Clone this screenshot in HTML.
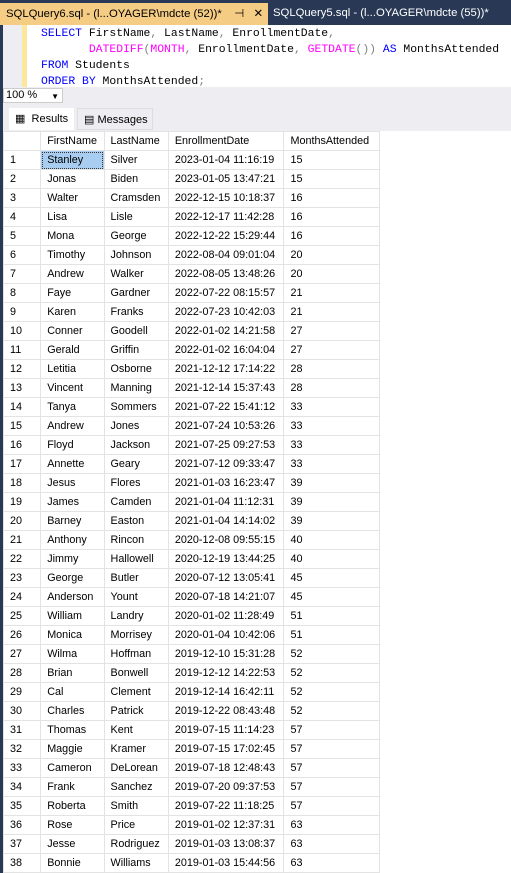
<!DOCTYPE html>
<html><head><style>
*{margin:0;padding:0;box-sizing:border-box}
body{width:511px;height:870px;overflow:hidden;background:#fff;font-family:"Liberation Sans",sans-serif;position:relative}
.tabs{position:absolute;left:0;top:0;width:511px;height:25px;background:#293955}
.tab1{position:absolute;left:0;top:3px;width:268px;height:22px;background:#f5cc84;color:#000;font-size:11.3px;padding:4px 0 0 6px;white-space:nowrap}
.tab2{position:absolute;left:273px;top:3px;color:#fff;font-size:11.3px;padding:4px 0 0 0;white-space:nowrap}
.ed{position:absolute;left:0;top:25px;width:511px;height:62px;background:#fff}
.gut{position:absolute;left:0;top:25px;width:22px;height:62px;background:#eeeef2;border-left:3px solid #293955}
.ybar{position:absolute;left:22px;top:25px;width:5px;height:62px;background:#fce89c}
.code{position:absolute;left:41px;top:26px;font-family:"Liberation Mono",monospace;font-size:11.4px;line-height:16px;white-space:pre;color:#000}
.k{color:#0000ff}.f{color:#ff00ff}.g{color:#808080}
.zoom{position:absolute;left:0;top:87px;width:511px;height:17px;background:#eeeef2;border-left:3px solid #293955}
.zbox{position:absolute;left:3px;top:88px;width:60px;height:15px;background:#fff;border:1px solid #ccc;font-size:11px;padding:0 0 0 2px}
.res{position:absolute;left:0;top:104px;width:511px;height:27px;background:#eeeef2;border-left:3px solid #293955}
.rt{position:absolute;top:108px;font-size:11px;height:22px;padding:4px 6px;white-space:nowrap}
.grid{position:absolute;left:0;top:131px;border-left:3px solid #293955}
table{border-collapse:collapse;font-size:10.8px;background:#fff;table-layout:fixed;width:377px}
td{height:19px;border:1px solid #e3e3e3;padding:0 0 0 6px;white-space:nowrap;overflow:hidden;color:#000}
</style></head><body>
<div class="tabs"></div>
<div class="tab1">SQLQuery6.sql - (l...OYAGER\mdcte (52))* &nbsp;&nbsp;&nbsp;⊣ &nbsp;&nbsp;✕</div>
<div class="tab2">SQLQuery5.sql - (l...OYAGER\mdcte (55))*</div>
<div class="ed"></div><div class="gut"></div><div class="ybar"></div>
<div class="code"><span class="k">SELECT</span> FirstName<span class="g">,</span> LastName<span class="g">,</span> EnrollmentDate<span class="g">,</span>
       <span class="f">DATEDIFF</span><span class="g">(</span><span class="f">MONTH</span><span class="g">,</span> EnrollmentDate<span class="g">,</span> <span class="f">GETDATE</span><span class="g">())</span> <span class="k">AS</span> MonthsAttended
<span class="k">FROM</span> Students
<span class="k">ORDER BY</span> MonthsAttended<span class="g">;</span></div>
<div class="zoom"></div>
<div class="zbox">100 % <span style="float:right;font-size:8px;padding:3px 3px 0 0">▼</span></div>
<div class="res"></div>
<div class="rt" style="left:9px;background:#fff;">▦ &nbsp;Results</div>
<div class="rt" style="left:77px;width:76px;background:#eeeef2;border:1px solid #ddd">▤ Messages</div>
<div class="grid"><table>
<colgroup><col style="width:37px"><col style="width:63px"><col style="width:64px"><col style="width:115px"><col style="width:95px"></colgroup>
<tr><td></td><td>FirstName</td><td>LastName</td><td>EnrollmentDate</td><td>MonthsAttended</td></tr>
<tr><td>1</td><td style="background:#a8cdf0;outline:1px dotted #333;outline-offset:-2px">Stanley</td><td>Silver</td><td>2023-01-04 11:16:19</td><td>15</td></tr>
<tr><td>2</td><td>Jonas</td><td>Biden</td><td>2023-01-05 13:47:21</td><td>15</td></tr>
<tr><td>3</td><td>Walter</td><td>Cramsden</td><td>2022-12-15 10:18:37</td><td>16</td></tr>
<tr><td>4</td><td>Lisa</td><td>Lisle</td><td>2022-12-17 11:42:28</td><td>16</td></tr>
<tr><td>5</td><td>Mona</td><td>George</td><td>2022-12-22 15:29:44</td><td>16</td></tr>
<tr><td>6</td><td>Timothy</td><td>Johnson</td><td>2022-08-04 09:01:04</td><td>20</td></tr>
<tr><td>7</td><td>Andrew</td><td>Walker</td><td>2022-08-05 13:48:26</td><td>20</td></tr>
<tr><td>8</td><td>Faye</td><td>Gardner</td><td>2022-07-22 08:15:57</td><td>21</td></tr>
<tr><td>9</td><td>Karen</td><td>Franks</td><td>2022-07-23 10:42:03</td><td>21</td></tr>
<tr><td>10</td><td>Conner</td><td>Goodell</td><td>2022-01-02 14:21:58</td><td>27</td></tr>
<tr><td>11</td><td>Gerald</td><td>Griffin</td><td>2022-01-02 16:04:04</td><td>27</td></tr>
<tr><td>12</td><td>Letitia</td><td>Osborne</td><td>2021-12-12 17:14:22</td><td>28</td></tr>
<tr><td>13</td><td>Vincent</td><td>Manning</td><td>2021-12-14 15:37:43</td><td>28</td></tr>
<tr><td>14</td><td>Tanya</td><td>Sommers</td><td>2021-07-22 15:41:12</td><td>33</td></tr>
<tr><td>15</td><td>Andrew</td><td>Jones</td><td>2021-07-24 10:53:26</td><td>33</td></tr>
<tr><td>16</td><td>Floyd</td><td>Jackson</td><td>2021-07-25 09:27:53</td><td>33</td></tr>
<tr><td>17</td><td>Annette</td><td>Geary</td><td>2021-07-12 09:33:47</td><td>33</td></tr>
<tr><td>18</td><td>Jesus</td><td>Flores</td><td>2021-01-03 16:23:47</td><td>39</td></tr>
<tr><td>19</td><td>James</td><td>Camden</td><td>2021-01-04 11:12:31</td><td>39</td></tr>
<tr><td>20</td><td>Barney</td><td>Easton</td><td>2021-01-04 14:14:02</td><td>39</td></tr>
<tr><td>21</td><td>Anthony</td><td>Rincon</td><td>2020-12-08 09:55:15</td><td>40</td></tr>
<tr><td>22</td><td>Jimmy</td><td>Hallowell</td><td>2020-12-19 13:44:25</td><td>40</td></tr>
<tr><td>23</td><td>George</td><td>Butler</td><td>2020-07-12 13:05:41</td><td>45</td></tr>
<tr><td>24</td><td>Anderson</td><td>Yount</td><td>2020-07-18 14:21:07</td><td>45</td></tr>
<tr><td>25</td><td>William</td><td>Landry</td><td>2020-01-02 11:28:49</td><td>51</td></tr>
<tr><td>26</td><td>Monica</td><td>Morrisey</td><td>2020-01-04 10:42:06</td><td>51</td></tr>
<tr><td>27</td><td>Wilma</td><td>Hoffman</td><td>2019-12-10 15:31:28</td><td>52</td></tr>
<tr><td>28</td><td>Brian</td><td>Bonwell</td><td>2019-12-12 14:22:53</td><td>52</td></tr>
<tr><td>29</td><td>Cal</td><td>Clement</td><td>2019-12-14 16:42:11</td><td>52</td></tr>
<tr><td>30</td><td>Charles</td><td>Patrick</td><td>2019-12-22 08:43:48</td><td>52</td></tr>
<tr><td>31</td><td>Thomas</td><td>Kent</td><td>2019-07-15 11:14:23</td><td>57</td></tr>
<tr><td>32</td><td>Maggie</td><td>Kramer</td><td>2019-07-15 17:02:45</td><td>57</td></tr>
<tr><td>33</td><td>Cameron</td><td>DeLorean</td><td>2019-07-18 12:48:43</td><td>57</td></tr>
<tr><td>34</td><td>Frank</td><td>Sanchez</td><td>2019-07-20 09:37:53</td><td>57</td></tr>
<tr><td>35</td><td>Roberta</td><td>Smith</td><td>2019-07-22 11:18:25</td><td>57</td></tr>
<tr><td>36</td><td>Rose</td><td>Price</td><td>2019-01-02 12:37:31</td><td>63</td></tr>
<tr><td>37</td><td>Jesse</td><td>Rodriguez</td><td>2019-01-03 13:08:37</td><td>63</td></tr>
<tr><td>38</td><td>Bonnie</td><td>Williams</td><td>2019-01-03 15:44:56</td><td>63</td></tr>
</table></div>
</body></html>
